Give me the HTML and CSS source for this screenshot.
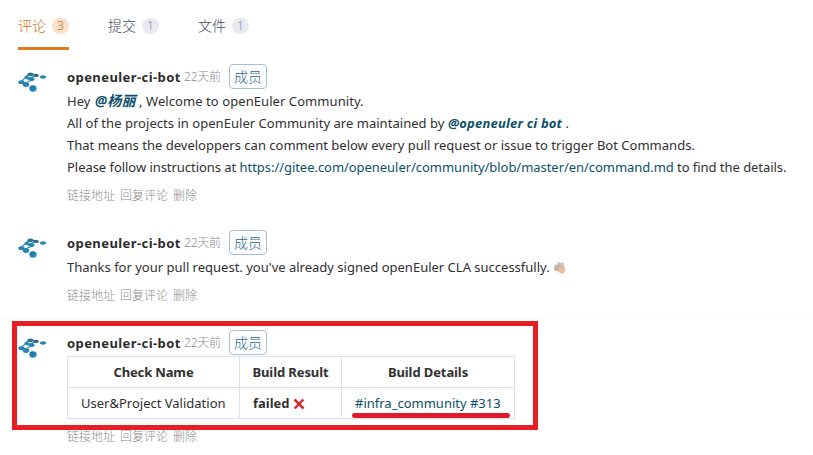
FILE: index.html
```html
<!DOCTYPE html>
<html lang="zh-CN">
<head>
<meta charset="utf-8">
<title>openEuler</title>
<link rel="stylesheet" href="styles.css">
</head>
<body>
<svg class="defs" aria-hidden="true">
  <defs>
    <linearGradient id="blue" x1="0" y1="0" x2="1" y2="1"><stop offset="0" stop-color="#1e6797"/><stop offset="1" stop-color="#229cc8"/></linearGradient>
    <symbol id="bot" viewBox="0 0 30 24">
      <g fill="#2585b0">
        <path d="M1 11 6 7 11 2 19 3 14 5 9 7 M9 7 15 8 9 10 M2 11 9 13" stroke="#3b93b8" stroke-width="1.2" fill="none"/>
        <ellipse cx="12.5" cy="2.2" rx="3" ry="1.8" fill="#287199"/>
        <ellipse cx="18" cy="3.4" rx="2.8" ry="1.7" fill="#2c6888"/>
        <ellipse cx="25" cy="5" rx="3" ry="1.7"/>
        <ellipse cx="8.8" cy="5.3" rx="2.4" ry="1.6"/>
        <ellipse cx="13.5" cy="7" rx="3" ry="1.9"/>
        <ellipse cx="3.5" cy="10.2" rx="3.2" ry="1.9"/>
        <ellipse cx="8" cy="12.5" rx="3.2" ry="2.5"/>
        <ellipse cx="15" cy="16.5" rx="3.6" ry="3.3" fill="url(#blue)"/>
      </g>
    </symbol>
  </defs>
</svg>
<nav class="tabs">
  <a class="tab active">评论<span class="count">3</span></a>
  <a class="tab">提交<span class="count">1</span></a>
  <a class="tab">文件<span class="count">1</span></a>
</nav>
<main>
  <article class="comment first">
    <svg class="avatar"><use href="#bot"/></svg>
    <div class="content">
      <header><b class="author">openeuler-ci-bot</b><span class="time">22天前</span><span class="role">成员</span></header>
      <p><span class="l1">Hey <a class="mention person">@杨丽</a> , Welcome to openEuler Community.</span></p>
      <p><span class="l2">All of the projects in openEuler Community are maintained by <a class="mention">@openeuler ci bot</a> .</span></p>
      <p><span class="l3">That means the developpers can comment below every pull request or issue to trigger Bot Commands.</span></p>
      <p><span class="l4">Please follow instructions at <a>https://gitee.com/openeuler/community/blob/master/en/command.md</a> to find the details.</span></p>
      <footer><span>链接地址</span><span>回复评论</span><span>删除</span></footer>
    </div>
  </article>
  <article class="comment second">
    <svg class="avatar"><use href="#bot"/></svg>
    <div class="content">
      <header><b class="author">openeuler-ci-bot</b><span class="time">22天前</span><span class="role">成员</span></header>
      <p><span>Thanks for your pull request. you've already signed openEuler CLA successfully.</span><svg class="clap" viewBox="0 0 14 14"><path d="M1 6 2 3 4 4 5 1 8 2 10 1 11 4 12 7 9 12 6 11 1 9Z" fill="#cdbfb2"/><path d="M5 7 8 4 10 6 12 6 12 10 10 13 7 12 4 9Z" fill="#e9be9c"/><path d="M3 5 6 7M6 4 8 6M2 8 5 9" stroke="#a69b92" fill="none"/></svg></p>
      <footer><span>链接地址</span><span>回复评论</span><span>删除</span></footer>
    </div>
  </article>
  <article class="comment third">
    <svg class="avatar"><use href="#bot"/></svg>
    <div class="content">
      <header><b class="author">openeuler-ci-bot</b><span class="time">22天前</span><span class="role">成员</span></header>
      <table>
        <colgroup><col class="c1"><col class="c2"><col class="c3"></colgroup>
        <tr><th class="name">Check Name</th><th>Build Result</th><th>Build Details</th></tr>
        <tr><td><span class="check">User&amp;Project Validation</span></td><td><b>failed</b><svg class="cross" viewBox="0 0 12 12"><path d="M1.5 1.5 10.5 10.5M10.3 1.5 1.7 10.5" stroke="#cf2c32" stroke-width="2.5"/></svg></td><td><a class="build">#infra_community #313</a></td></tr>
      </table>
      <footer><span>链接地址</span><span>回复评论</span><span>删除</span></footer>
    </div>
    <div class="highlight"></div>
    <div class="underline"></div>
  </article>
</main>
</body>
</html>
```
FILE: styles.css
```css
* { box-sizing: border-box; }
body { margin: 0; width: 813px; height: 455px; overflow: hidden; background: #fff; color: #303030; font: 13px/22px "Noto Sans", "Noto Sans CJK SC", sans-serif; }
.defs { position: absolute; width: 0; height: 0; }
.tabs { display: flex; gap: 39px; height: 50px; padding-left: 18px; }
.tab { display: flex; align-items: center; gap: 6px; height: 50px; padding-top: 5px; font-size: 14px; font-weight: 300; color: #40485b; border-bottom: 3px solid transparent; }
.tab.active { color: #d0751a; border-color: #e07b22; }
.count { width: 17px; height: 16px; border-radius: 8px; background: #e8eaef; color: #8791a5; font-size: 12px; line-height: 16px; text-align: center; }
.active .count { background: #fbe0cc; color: #c9732f; }
.comment { position: relative; display: flex; padding-left: 18px; }
.first { height: 166px; padding-top: 14px; }
.second { height: 103px; padding-top: 14px; border-bottom: 1px solid #f8f8f8; }
.third { height: 136px; padding-top: 11px; }
.avatar { width: 30px; height: 24px; margin: 8px 19px 0 0; flex: none; }
header { display: flex; align-items: center; height: 26px; }
.author { width: 117px; color: #2c2c2c; white-space: nowrap; letter-spacing: 0.42px; }
.time { width: 45px; font-size: 12px; font-weight: 300; color: #8c8c8c; white-space: nowrap; letter-spacing: -0.2px; }
.role { width: 38px; height: 25px; margin-top: -1px; border: 1px solid #a5c0d0; border-radius: 4px; color: #2c6583; font-size: 14px; font-weight: 300; line-height: 23px; text-align: center; }
p { margin: 0; height: 22px; display: flex; align-items: center; white-space: nowrap; }
a { color: #0e5068; }
.mention { font-weight: 700; font-style: italic; }
.l1 { letter-spacing: 0.07px; }
.person { margin-left: 1px; font-size: 14px; letter-spacing: 0.2px; }
.l2 { letter-spacing: 0.035px; }
.l2 .mention { letter-spacing: 0.2px; }
.l3 { letter-spacing: 0.012px; }
.l4 { letter-spacing: -0.046px; }
footer { display: flex; gap: 5px; margin-top: 7px; height: 22px; font-size: 12px; font-weight: 300; color: #8c8c8c; }
.clap { width: 14px; height: 14px; margin: 2px 0 0 3px; }
table { width: 447px; border-collapse: collapse; table-layout: fixed; font-size: 13px; }
.c1 { width: 172px; } .c2 { width: 102px; } .c3 { width: 173px; }
th, td { height: 31px; padding: 0 13px; border: 1px solid #dfe2e5; white-space: nowrap; line-height: 22px; }
th { padding: 0; text-align: center; letter-spacing: -0.1px; }
.name { letter-spacing: -0.15px; }
.cross { width: 12px; height: 12px; margin-left: 3px; vertical-align: -2px; }
.highlight { position: absolute; left: 12px; top: 2px; width: 526px; height: 109px; border: 5px solid #e71f25; }
.underline { position: absolute; left: 352px; top: 94px; width: 158px; height: 5px; border-radius: 3px; background: #e2192a; }
```
